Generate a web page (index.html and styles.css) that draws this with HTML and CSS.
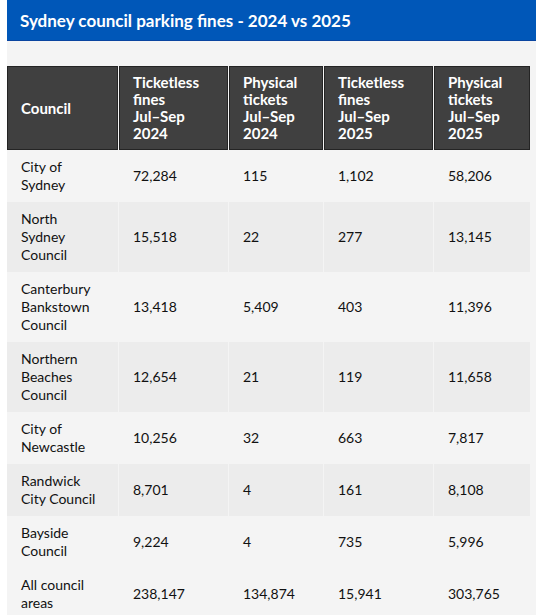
FILE: index.html
```html
<!DOCTYPE html>
<html>
<head>
    <meta http-equiv="content-type" content="text/html; charset=UTF-8">
    <meta name="viewport" content="width=device-width, initial-scale=1.0">
    <title>Sydney council parking fines</title>
    <link rel="stylesheet" href="styles.css">
</head>

<body>
    <div class="box">
        <h2 class="title">Sydney council parking fines - 2024 vs 2025</h2>
        <div class="content">
            <table class="fines">
                <thead>
                    <tr>
                        <th class="c1">Council</th>
                        <th class="c2">Ticketless<br>fines<br>Jul–Sep<br>2024</th>
                        <th class="c3">Physical<br>tickets<br>Jul–Sep<br>2024</th>
                        <th class="c4">Ticketless<br>fines<br>Jul–Sep<br>2025</th>
                        <th class="c5">Physical<br>tickets<br>Jul–Sep<br>2025</th>
                    </tr>
                </thead>
                <tbody>
                    <tr>
                        <td>City of Sydney</td><td>72,284</td><td>115</td><td>1,102</td><td>58,206</td>
                    </tr>
                    <tr>
                        <td>North Sydney Council</td><td>15,518</td><td>22</td><td>277</td><td>13,145</td>
                    </tr>
                    <tr>
                        <td>Canterbury Bankstown Council</td><td>13,418</td><td>5,409</td><td>403</td><td>11,396</td>
                    </tr>
                    <tr>
                        <td>Northern Beaches Council</td><td>12,654</td><td>21</td><td>119</td><td>11,658</td>
                    </tr>
                    <tr>
                        <td>City of Newcastle</td><td>10,256</td><td>32</td><td>663</td><td>7,817</td>
                    </tr>
                    <tr>
                        <td>Randwick City Council</td><td>8,701</td><td>4</td><td>161</td><td>8,108</td>
                    </tr>
                    <tr>
                        <td>Bayside Council</td><td>9,224</td><td>4</td><td>735</td><td>5,996</td>
                    </tr>
                </tbody>
                <tfoot>
                    <tr>
                        <td>All council areas</td><td>238,147</td><td>134,874</td><td>15,941</td><td>303,765</td>
                    </tr>
                </tfoot>
            </table>
        </div>
    </div>
</body>

</html>
```

FILE: styles.css
```css
body {
    margin: 0;
    padding-left: 7px;
    font-family: "Lato", "Liberation Sans", sans-serif;
    color: #111;
    overflow: hidden;
}

.box {
    width: 529px;
    background: #f4f4f4;
}

.title {
    margin: 0;
    height: 40px;
    padding: 0 13px;
    display: flex;
    align-items: center;
    background: #0057b8;
    border-bottom: 1px solid #0a45a0;
    color: #fff;
    font-size: 17px;
    font-weight: bold;
}

.content {
    padding-top: 25px;
}

.fines {
    border-collapse: separate;
    border-spacing: 1px 0;
    margin-left: -1px;
    table-layout: fixed;
    width: 524px;
    font-size: 14px;
}

.fines th,
.fines td {
    box-sizing: border-box;
    text-align: left;
    vertical-align: middle;
}

.fines th {
    background: #404040;
    border: 1px solid #242424;
    color: #fff;
    font-size: 15px;
    font-weight: bold;
    line-height: 17px;
    padding: 7px 13px;
}

.fines td {
    line-height: 18px;
    padding: 8px 14px;
}

.fines tbody tr:nth-child(even) td {
    background: #ececec;
}

.c1 { width: 111px; }
.c2 { width: 109px; }
.c3 { width: 94px; }
.c4 { width: 109px; }
.c5 { width: 96px; }
```
